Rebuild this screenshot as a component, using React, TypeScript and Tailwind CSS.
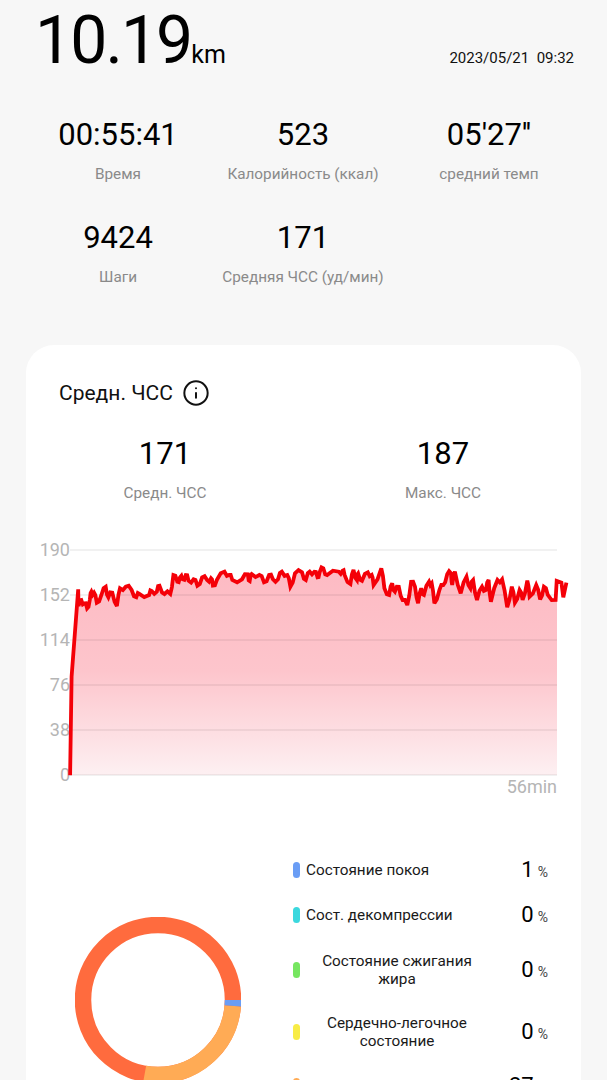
import { Info } from "lucide-react";

const font = "font-['Roboto',sans-serif]";

// traced from the chart, x in 1/2.583 px, y in 1/3 px from the crop at y=520
const trace: [number, number][] = [
  [181, 766], [185, 470], [202, 208], [203, 258], [210, 240], [218, 250], [225, 265], [232, 240], [236, 215], [243, 218],
  [250, 248], [262, 225], [273, 200], [280, 232], [290, 218], [302, 258], [310, 205], [325, 200], [340, 210], [352, 232],
  [360, 222], [385, 225], [392, 213], [405, 215], [412, 197], [425, 222], [440, 222], [448, 165], [458, 185], [465, 172],
  [472, 178], [480, 165], [487, 182], [500, 178], [510, 197], [522, 172], [535, 180], [545, 175], [550, 197], [560, 180],
  [580, 155], [592, 165], [600, 180], [625, 178], [640, 163], [645, 183], [650, 162], [670, 165], [682, 187], [695, 165],
  [705, 178], [718, 178], [728, 155], [742, 165], [750, 200], [762, 160], [780, 157], [790, 180], [800, 155], [812, 155],
  [820, 172], [826, 155], [835, 145], [845, 165], [875, 155], [885, 152], [890, 165], [905, 192], [913, 150], [922, 180],
  [925, 160], [935, 182], [950, 157], [960, 165], [965, 195], [985, 145], [993, 205], [1005, 225], [1013, 190], [1020, 215],
  [1030, 200], [1040, 240], [1052, 255], [1062, 185], [1072, 200], [1080, 250], [1088, 205], [1095, 225], [1108, 185], [1115, 190],
  [1122, 250], [1135, 210], [1145, 195], [1155, 163], [1165, 160], [1168, 195], [1175, 155], [1190, 220], [1205, 170], [1215, 205],
  [1222, 180], [1232, 240], [1245, 200], [1255, 210], [1262, 180], [1268, 245], [1285, 180], [1297, 178], [1310, 262], [1322, 200],
  [1330, 248], [1342, 210], [1350, 240], [1362, 182], [1368, 230], [1385, 195], [1395, 238], [1405, 200], [1415, 225], [1435, 240],
  [1438, 183], [1450, 188], [1455, 232], [1463, 188],
];

// extra wiggle between traced points so the line looks as noisy as the sensor data
const pts: [number, number][] = [];
trace.forEach(([x, y], i) => {
  const px = x / 2.583;
  const py = y / 3;
  if (i > 2 && i < trace.length - 4) {
    const [lx, ly] = trace[i - 1];
    pts.push([(lx / 2.583 + px) / 2, (ly / 3 + py) / 2 + (i % 2 ? 2.6 : -2.6)]);
  }
  pts.push([px, py]);
});

const fmt = (list: [number, number][]) => list.map(([x, y]) => `${x.toFixed(1)},${y.toFixed(1)}`).join(" ");
const line = fmt(pts);
const area = fmt(pts.filter(([x]) => x <= 557)) + " 557,65 557,255 70,255";

const gridY = [30, 75, 120, 165, 210, 255];
const axis = ["190", "152", "114", "76", "38", "0"];

function Stat({ value, label }: { value: string; label: string }) {
  return (
    <div className="flex flex-col items-center">
      <div className="text-[31px] leading-[36px] font-[430] text-black">{value}</div>
      <div className="mt-[11px] text-[15.3px] leading-[20px] text-[#8a8a8a] whitespace-nowrap">{label}</div>
    </div>
  );
}

function Legend({ color, label, value, center }: { color: string; label: string; value: string; center?: boolean }) {
  return (
    <div className="flex w-[255px] items-center">
      <div className={`h-[16px] w-[7px] shrink-0 rounded-full ${color}`} />
      <div className={`text-[15.3px] leading-[18px] text-[#1a1a1a] ${center ? "w-[188px] pl-[6px] text-center" : "pl-[6px] whitespace-nowrap"}`}>
        {label}
      </div>
      <div className="ml-auto flex items-baseline">
        <span className="text-[22px] leading-[26px] text-black">{value}</span>
        <span className="ml-[4px] text-[14px] leading-[16px] text-[#444]">%</span>
      </div>
    </div>
  );
}

export default function App() {
  return (
    <div className={`h-[1080px] overflow-hidden bg-[#f7f7f7] ${font}`}>
      <header className="flex items-end justify-between pl-[35px] pr-[33px] pt-[6px]">
        <div className="flex items-baseline">
          <span className="text-[66px] leading-[70px] tracking-[-1.9px] text-black">10.19</span>
          <span className="text-[25px] leading-[30px] text-black">km</span>
        </div>
        <div className="mb-[8px] text-[15px] leading-[20px] text-[#111] whitespace-pre">2023/05/21  09:32</div>
      </header>

      <section className="mt-[41px] grid grid-cols-[188px_182px_190px] justify-start gap-y-[36px] pl-[24px]">
        <Stat value="00:55:41" label="Время" />
        <Stat value="523" label="Калорийность (ккал)" />
        <Stat value={"05'27''"} label="средний темп" />
        <Stat value="9424" label="Шаги" />
        <Stat value="171" label="Средняя ЧСС (уд/мин)" />
      </section>

      <main className="mx-[26px] mt-[58px] rounded-t-[28px] bg-white pt-[33px]">
        <div className="flex items-center gap-[9px] pl-[33px]">
          <h2 className="text-[21px] leading-[30px] text-[#111]">Средн. ЧСС</h2>
          <Info className="h-[28px] w-[28px] text-[#111]" strokeWidth={1.7} />
        </div>

        <div className="mt-[28px] flex">
          <div className="ml-[28px] w-[222px]">
            <Stat value="171" label="Средн. ЧСС" />
          </div>
          <div className="ml-[56px] w-[222px]">
            <Stat value="187" label="Макс. ЧСС" />
          </div>
        </div>

        <svg className="-ml-[26px] mt-[17px] block h-[280px] w-[607px]" viewBox="0 0 607 280">
          <defs>
            <linearGradient id="hr" x1="0" y1="0" x2="0" y2="1">
              <stop offset="0" stopColor="#fdbac3" />
              <stop offset="0.5" stopColor="#fdc5cc" />
              <stop offset="1" stopColor="#fdf0f2" />
            </linearGradient>
          </defs>
          <polygon points={area} fill="url(#hr)" />
          {gridY.map((y) => (
            <line key={y} x1="70" x2="557" y1={y} y2={y} stroke="#000" strokeOpacity="0.11" strokeWidth="1" />
          ))}
          {axis.map((t, i) => (
            <text key={t} x="70" y={gridY[i] + 6} textAnchor="end" fontSize="18" fill="#b5b5b5" fontFamily="Roboto">
              {t}
            </text>
          ))}
          <polyline points={line} fill="none" stroke="#f40008" strokeWidth="3.8" strokeLinejoin="miter" strokeMiterlimit="3" />
          <text x="557" y="273" textAnchor="end" fontSize="18" fill="#b5b5b5" fontFamily="Roboto">
            56min
          </text>
        </svg>

        <div className="mt-[40px] flex">
          <svg className="mt-[77px] ml-[49px] h-[166px] w-[166px] shrink-0" viewBox="0 0 166 166">
            <g fill="none" strokeWidth="16.5">
              <circle cx="83" cy="83" r="75" stroke="#ff6b3e" />
              <circle cx="83" cy="83" r="75" stroke="#ffab55" strokeDasharray="125 471.2" strokeDashoffset="-6" />
              <circle cx="83" cy="83" r="75" stroke="#6a9df5" strokeDasharray="6 471.2" />
            </g>
          </svg>
          <div className="ml-[52px] flex flex-col pt-[17px]">
            <div className="h-[18px]">
              <Legend color="bg-[#6a9df5]" label="Состояние покоя" value="1" />
            </div>
            <div className="mt-[27px] h-[18px]">
              <Legend color="bg-[#3bd8de]" label="Сост. декомпрессии" value="0" />
            </div>
            <div className="mt-[32px] h-[36px]">
              <Legend color="bg-[#76e660]" label="Состояние сжигания жира" value="0" center />
            </div>
            <div className="mt-[26px] h-[36px]">
              <Legend color="bg-[#f8ec45]" label="Сердечно-легочное состояние" value="0" center />
            </div>
            <div className="mt-[23px] h-[18px]">
              <Legend color="bg-[#ffab55]" label="" value="27" />
            </div>
          </div>
        </div>
      </main>
    </div>
  );
}
